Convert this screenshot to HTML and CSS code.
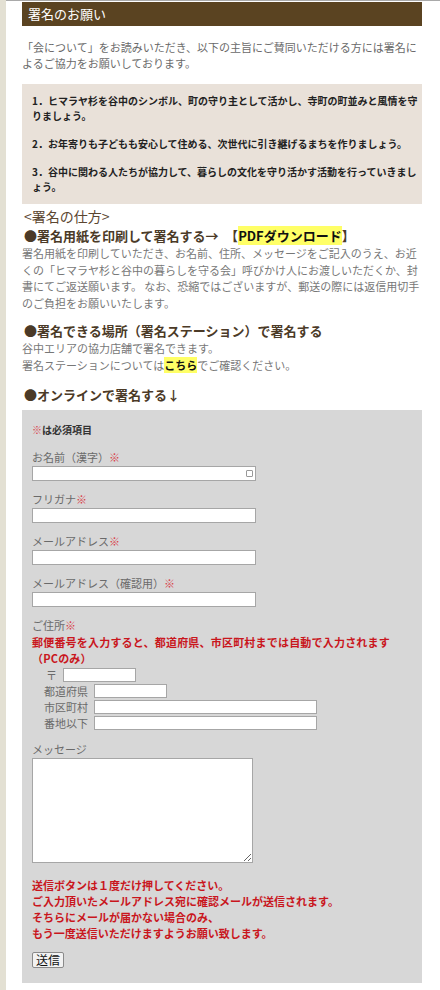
FILE: index.html
```html
<!DOCTYPE html>
<html lang="ja">

<head>
    <meta charset="UTF-8">
    <meta name="viewport" content="width=device-width, initial-scale=1.0">
    <title>署名のお願い</title>
    <link rel="stylesheet" href="styles.css">
</head>

<body>
    <div class="page">
        <div class="main">
            <h2 class="title">署名のお願い</h2>
            <p class="intro">「会について」をお読みいただき、以下の主旨にご賛同いただける方には署名によるご協力をお願いしております。</p>

            <div class="aims">
                <p>1．ヒマラヤ杉を谷中のシンボル、町の守り主として活かし、寺町の町並みと風情を守りましょう。</p>
                <p>2．お年寄りも子どもも安心して住める、次世代に引き継げるまちを作りましょう。</p>
                <p>3．谷中に関わる人たちが協力して、暮らしの文化を守り活かす活動を行っていきましょう。</p>
            </div>

            <h3 class="howto">&lt;署名の仕方&gt;</h3>

            <h4 class="way">●署名用紙を印刷して署名する→　【<a href="#" class="mark">PDFダウンロード</a>】</h4>
            <p class="text">署名用紙を印刷していただき、お名前、住所、メッセージをご記入のうえ、お近くの「ヒマラヤ杉と谷中の暮らしを守る会」呼びかけ人にお渡しいただくか、封書にてご返送願います。 なお、恐縮ではございますが、郵送の際には返信用切手のご負担をお願いいたします。</p>

            <h4 class="way">●署名できる場所（署名ステーション）で署名する</h4>
            <p class="text">谷中エリアの協力店舗で署名できます。<br>署名ステーションについては<a href="#" class="mark">こちら</a>でご確認ください。</p>

            <h4 class="way online">●オンラインで署名する↓</h4>

            <form class="sign-form" onsubmit="return false">
                <p class="required"><span class="req">※</span>は必須項目</p>

                <div class="field">
                    <label>お名前（漢字）<span class="req">※</span></label>
                    <div class="input-wrap">
                        <input type="text" class="wide">
                        <span class="key-icon"></span>
                    </div>
                </div>
                <div class="field">
                    <label>フリガナ<span class="req">※</span></label>
                    <input type="text" class="wide">
                </div>
                <div class="field">
                    <label>メールアドレス<span class="req">※</span></label>
                    <input type="text" class="wide">
                </div>
                <div class="field">
                    <label>メールアドレス（確認用）<span class="req">※</span></label>
                    <input type="text" class="wide">
                </div>

                <div class="field">
                    <label>ご住所<span class="req">※</span></label>
                    <p class="notice spaced">郵便番号を入力すると、都道府県、市区町村までは自動で入力されます<br>（PCのみ）</p>
                    <div class="addr">
                        <div class="addr-row"><span class="zip-mark">〒</span><input type="text" class="zip"></div>
                        <div class="addr-row"><span>都道府県</span><input type="text" class="pref"></div>
                        <div class="addr-row"><span>市区町村</span><input type="text" class="city"></div>
                        <div class="addr-row"><span>番地以下</span><input type="text" class="city"></div>
                    </div>
                </div>

                <div class="field message">
                    <label>メッセージ</label>
                    <textarea></textarea>
                </div>

                <p class="notice send-note">送信ボタンは１度だけ押してください。<br>ご入力頂いたメールアドレス宛に確認メールが送信されます。<br>そちらにメールが届かない場合のみ、<br>もう一度送信いただけますようお願い致します。</p>

                <input type="submit" value="送信" class="send">
            </form>
        </div>
    </div>
</body>

</html>
```

FILE: styles.css
```css
* {
    margin: 0;
    padding: 0;
    box-sizing: border-box;
    font-family: "Noto Sans CJK JP", "Liberation Sans", sans-serif;
}

body {
    background-color: #e3e0d3;
    padding-left: 6px;
}

.page {
    background-color: #fff;
    border-top: 1px solid #a9a9a9;
    min-height: 990px;
    padding: 1px 0 10px 16px;
}

.main {
    width: 400px;
}

.title {
    background-color: #5a4321;
    color: #fff;
    font-size: 13px;
    font-weight: normal;
    line-height: 24px;
    padding-left: 6px;
}

.intro {
    color: #6a6a6a;
    font-size: 11px;
    line-height: 16px;
    margin: 13px 0 13px;
}

.aims {
    background-color: #e9e1d9;
    padding: 9px 3px 10px 10px;
}

.aims p {
    color: #222;
    font-size: 10px;
    font-weight: bold;
    line-height: 15px;
    margin-bottom: 13px;
}

.aims p:last-child {
    margin-bottom: 0;
}

.howto {
    color: #5b4630;
    font-size: 14px;
    font-weight: normal;
    line-height: 20px;
    margin-top: 2px;
    padding-left: 2px;
}

.way {
    color: #4b3a27;
    font-size: 13px;
    font-weight: bold;
    line-height: 19px;
    padding-left: 2px;
}

.way.online {
    margin-top: 12px;
}

.mark {
    background-color: #ffff66;
    color: #111;
    font-weight: bold;
    text-decoration: none;
}

.text {
    color: #777;
    font-size: 11px;
    line-height: 16.7px;
    margin-bottom: 9px;
}

.text:first-of-type {
    margin-top: 1px;
}

.sign-form {
    background-color: #d7d7d7;
    margin-top: 6px;
    padding: 12px 10px 13px;
}

.required {
    color: #333;
    font-size: 10px;
    font-weight: bold;
    line-height: 16px;
    margin-bottom: 11px;
}

.req {
    color: #d9414a;
    font-weight: normal;
}

.field {
    margin-bottom: 10px;
}

.field label {
    display: block;
    color: #6a6a6a;
    font-size: 11px;
    line-height: 17px;
}

.input-wrap {
    position: relative;
    width: 224px;
}

.key-icon {
    position: absolute;
    right: 3px;
    top: 4px;
    width: 7px;
    height: 7px;
    border: 1px solid #999;
    border-radius: 1px;
}

input[type="text"] {
    display: block;
    height: 15px;
    border: 1px solid #a6a6a6;
    background-color: #fff;
    font-size: 11px;
}

input.wide {
    width: 224px;
}

.notice {
    color: #c9161d;
    font-size: 11px;
    font-weight: bold;
    line-height: 16px;
}

.notice.spaced {
    letter-spacing: 0.2px;
}

.addr {
    padding: 1px 0 0 12px;
}

.addr-row {
    display: flex;
    align-items: center;
    gap: 6px;
    height: 16px;
    color: #6a6a6a;
    font-size: 11px;
}

.addr-row .zip-mark {
    padding-left: 2px;
}

input.zip {
    width: 73px;
    height: 14px;
}

input.pref {
    width: 73px;
    height: 14px;
}

input.city {
    width: 223px;
    height: 14px;
}

.message {
    margin-top: 10px;
}

.field textarea {
    display: block;
    width: 221px;
    height: 105px;
    border: 1px solid #a6a6a6;
    background-color: #fff;
}

.send-note {
    margin-top: 14px;
}

input.send {
    margin-top: 11px;
    height: 16px;
    padding: 0 3px;
    border: 1px solid #8a8a8a;
    border-radius: 2px;
    background-color: #f2f2f2;
    color: #111;
    font-size: 12px;
    line-height: 14px;
}
```
